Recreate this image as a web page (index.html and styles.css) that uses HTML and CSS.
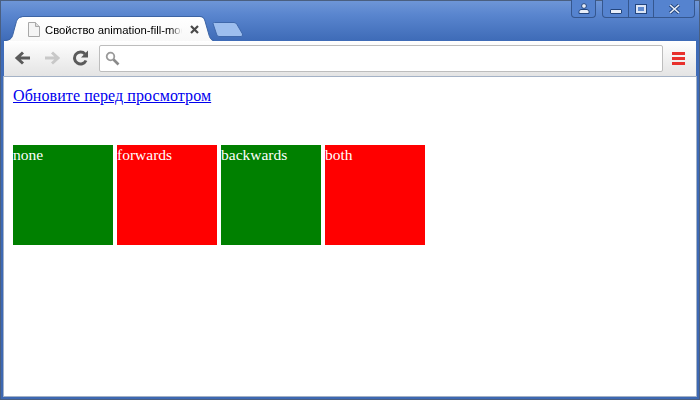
FILE: index.html
```html
<!DOCTYPE html>
<html lang="ru">
<head>
  <meta charset="UTF-8">
  <title>Свойство animation-fill-mode</title>
  <link rel="stylesheet" href="styles.css">
</head>
<body>
  <div class="window">
    <div class="titlebar">
      <div class="tabstrip">
        <div class="tab">
          <svg class="tab-shape" width="210" height="25" viewBox="0 0 210 25">
            <defs>
              <linearGradient id="tabfill" x1="0" y1="0" x2="0" y2="1">
                <stop offset="0" stop-color="#ffffff"/>
                <stop offset="1" stop-color="#f8f8f8"/>
              </linearGradient>
            </defs>
            <path d="M0 25 C5 25 8 23 9 18 L12 7 C13 3 15 1 20 1 L196 1 C199 1 200 2 201 5 L205 19 C206 23 208 25 210 25 Z" fill="url(#tabfill)"/>
            <path d="M0 24.500 C5 24.500 8 23 9 18 L12 7 C13 3 15 .5 20 .5 L196 .5 C199 .5 200 2 201 5 L205 19 C206 23 208 24.500 210 24.500" fill="none" stroke="#3c64a4"/>
          </svg>
          <svg class="favicon" width="12" height="15" viewBox="0 0 12 15">
            <path d="M.5 .5 H7.500 L11.500 4.500 V14.500 H.5 Z" fill="#f4f4f4" stroke="#a8a8a8"/>
            <path d="M7.500 .5 V4.500 H11.500" fill="#dcdcdc" stroke="#a8a8a8"/>
          </svg>
          <span class="tab-title">Свойство animation-fill-mode</span>
          <svg class="tab-close" width="9" height="9" viewBox="0 0 9 9">
            <path d="M1 1 L8 8 M8 1 L1 8" stroke="#4a4a4a" stroke-width="2.200"/>
          </svg>
        </div>
        <svg class="new-tab" width="32" height="15" viewBox="0 0 32 15">
          <path d="M1 1.500 Q1 .5 2.500 .5 H22 Q24 .5 25 2.500 L30.500 12 Q31 14.500 29 14.500 H7 Q5 14.500 4.500 12 Z" fill="#9dbeee" stroke="#3f68ab"/>
        </svg>
      </div>
      <div class="controls">
        <div class="ctrl-group">
          <div class="ctrl ctrl-user">
            <svg width="12" height="11" viewBox="0 0 12 11">
              <circle cx="6" cy="3" r="2.400" fill="#e8eef8" stroke="#24467e"/>
              <path d="M1 10.500 V8.500 Q1 7 3 6.500 H9 Q11 7 11 8.500 V10.500 Z" fill="#e8eef8" stroke="#24467e"/>
            </svg>
          </div>
        </div>
        <div class="ctrl-group">
          <div class="ctrl ctrl-min"><span class="min-bar"></span></div>
          <div class="ctrl ctrl-max"><span class="max-box"></span></div>
          <div class="ctrl ctrl-close">
            <svg width="13" height="10" viewBox="0 0 13 10">
              <path d="M2 1 L11 9 M11 1 L2 9" stroke="#24467e" stroke-width="3.400"/>
              <path d="M2 1 L11 9 M11 1 L2 9" stroke="#e8eef8" stroke-width="1.600"/>
            </svg>
          </div>
        </div>
      </div>
    </div>
    <div class="toolbar">
      <svg class="nav-icon" width="18" height="16" viewBox="0 0 18 16">
        <path d="M16 8 H4 M9 2.500 L3 8 L9 13.500" fill="none" stroke="#5a5a5a" stroke-width="3"/>
      </svg>
      <svg class="nav-icon" width="18" height="16" viewBox="0 0 18 16">
        <path d="M2 8 H14 M9 2.500 L15 8 L9 13.500" fill="none" stroke="#c8c8c8" stroke-width="3"/>
      </svg>
      <svg class="nav-icon" width="18" height="16" viewBox="0 0 18 16">
        <path d="M14 10.500 A6 6 0 1 1 13 4" fill="none" stroke="#5a5a5a" stroke-width="3"/>
        <path d="M16 0.500 V7.500 H9 Z" fill="#5a5a5a"/>
      </svg>
      <div class="omnibox">
        <svg width="15" height="15" viewBox="0 0 15 15">
          <circle cx="5.500" cy="5.500" r="3.800" fill="none" stroke="#9a9a9a" stroke-width="1.800"/>
          <path d="M8.500 8.500 L13.500 13.500" stroke="#8a8a8a" stroke-width="2.600"/>
        </svg>
      </div>
      <div class="menu">
        <span></span>
        <span></span>
        <span></span>
      </div>
    </div>
    <div class="content">
      <a class="reload-link" href="#">Обновите перед просмотром</a>
      <div class="boxes">
        <div class="box box-green">none</div>
        <div class="box box-red">forwards</div>
        <div class="box box-green">backwards</div>
        <div class="box box-red">both</div>
      </div>
    </div>
  </div>
</body>
</html>
```
FILE: styles.css
```css
* {
  margin: 0;
  padding: 0;
  box-sizing: border-box;
}

html, body {
  width: 700px;
  height: 400px;
  overflow: hidden;
}

.window {
  display: flex;
  flex-direction: column;
  width: 700px;
  height: 400px;
  padding: 0 4px 4px;
  background: linear-gradient(#6f97d8 0, #5a86cf 14px, #3f6cb8 40px, #3d68b2 100%);
  box-shadow: inset 0 0 0 1px #4a5f80;
}

/* Title bar */
.titlebar {
  display: flex;
  justify-content: space-between;
  align-items: flex-start;
  height: 41px;
}

.tabstrip {
  display: flex;
  align-items: flex-start;
  padding-top: 16px;
}

.tab {
  position: relative;
  display: flex;
  align-items: center;
  width: 210px;
  height: 25px;
  padding: 2px 0 0 24px;
}

.tab-shape {
  position: absolute;
  left: 0;
  top: 0;
}

.favicon, .tab-title, .tab-close {
  position: relative;
  flex: none;
}

.tab-title {
  width: 137px;
  margin-left: 5px;
  overflow: hidden;
  white-space: nowrap;
  font-family: "Liberation Sans", sans-serif;
  font-size: 11.3px;
  color: #000000;
  -webkit-mask-image: linear-gradient(to right, #000 126px, transparent 137px);
  mask-image: linear-gradient(to right, #000 126px, transparent 137px);
}

.tab-close {
  margin-left: 8px;
}

.new-tab {
  margin: 6px 0 0 -2px;
}

.controls {
  display: flex;
  gap: 6px;
  margin-right: 1px;
}

.ctrl-group {
  display: flex;
  height: 18px;
  border: 1px solid #35578f;
  border-top: none;
  border-radius: 0 0 4px 4px;
  background: #5583cf;
}

.ctrl {
  display: flex;
  justify-content: center;
  align-items: center;
  height: 17px;
}

.ctrl-user {
  width: 23px;
}

.ctrl-min {
  width: 26px;
  border-right: 1px solid #35578f;
}

.ctrl-max {
  width: 25px;
  border-right: 1px solid #35578f;
}

.ctrl-close {
  width: 40px;
}

.min-bar {
  width: 12px;
  height: 5px;
  margin-top: 5px;
  background: #e8eef8;
  border: 1px solid #24467e;
  border-radius: 1px;
}

.max-box {
  width: 12px;
  height: 10px;
  border: 3px solid #dbe5f5;
  outline: 1px solid #24467e;
  outline-offset: -1px;
  background: #5f8ad0;
}

/* Toolbar */
.toolbar {
  display: flex;
  align-items: center;
  height: 36px;
  padding: 0 11px 1px 10px;
  background: linear-gradient(#ffffff, #f6f6f6 30%, #e4e4e4);
  border-bottom: 1px solid #a9a9a9;
}

.nav-icon {
  flex: none;
  margin-right: 11px;
}

.omnibox {
  display: flex;
  align-items: center;
  flex: 1;
  height: 27px;
  margin-left: -2px;
  padding-left: 5px;
  background: #ffffff;
  border: 1px solid #bdbdbd;
  border-radius: 2px;
}

.menu {
  display: flex;
  flex-direction: column;
  gap: 2px;
  width: 13px;
  margin-left: 9px;
}

.menu span {
  height: 3px;
  background: #e8302c;
}

/* Page content */
.content {
  flex: 1;
  padding: 9px 9px 0;
  background: #ffffff;
  box-shadow: 0 0 0 1px #a4b2c6;
  font-family: "Liberation Serif", serif;
  font-size: 16px;
}

.reload-link {
  display: block;
  line-height: 20px;
  letter-spacing: .08px;
  color: #0000ee;
}

.boxes {
  display: flex;
  gap: 4px;
  margin-top: 39px;
}

.box {
  width: 100px;
  height: 100px;
  font-size: 15.5px;
  line-height: 20px;
  color: #ffffff;
}

.box-green {
  background: #008000;
}

.box-red {
  background: #ff0000;
}
```
